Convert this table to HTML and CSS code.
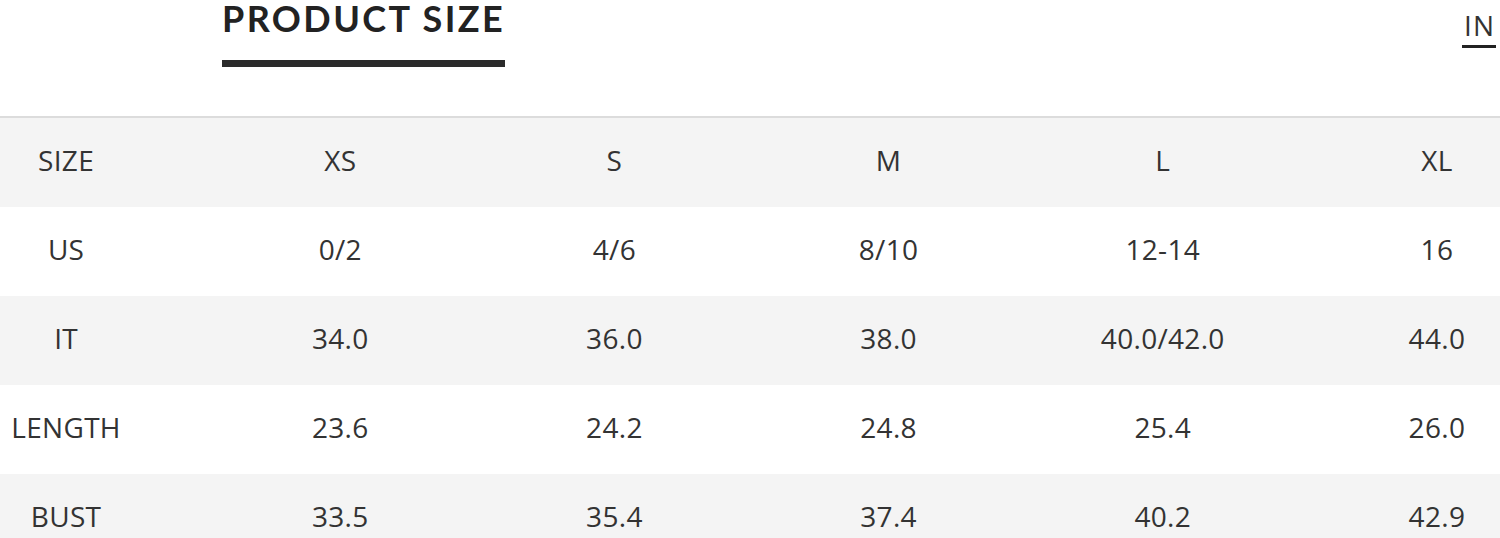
FILE: index.html
```html
<!DOCTYPE html>
<html>
<head>
<meta charset="utf-8">
<link rel="stylesheet" href="styles.css">
</head>
<body>
<div class="page">
  <header class="top">
    <div class="tab">
      <h1 class="title">PRODUCT SIZE</h1>
      <div class="tab-bar"></div>
    </div>
    <div class="unit">
      <span class="unit-label">IN</span>
    </div>
  </header>
  <div class="table-wrap">
    <div class="table">
      <div class="row gray">
        <div class="cell">SIZE</div><div class="cell">XS</div><div class="cell">S</div><div class="cell">M</div><div class="cell">L</div><div class="cell">XL</div>
      </div>
      <div class="row">
        <div class="cell">US</div><div class="cell">0/2</div><div class="cell">4/6</div><div class="cell">8/10</div><div class="cell">12-14</div><div class="cell">16</div>
      </div>
      <div class="row gray">
        <div class="cell">IT</div><div class="cell">34.0</div><div class="cell">36.0</div><div class="cell">38.0</div><div class="cell">40.0/42.0</div><div class="cell">44.0</div>
      </div>
      <div class="row">
        <div class="cell">LENGTH</div><div class="cell">23.6</div><div class="cell">24.2</div><div class="cell">24.8</div><div class="cell">25.4</div><div class="cell">26.0</div>
      </div>
      <div class="row gray">
        <div class="cell">BUST</div><div class="cell">33.5</div><div class="cell">35.4</div><div class="cell">37.4</div><div class="cell">40.2</div><div class="cell">42.9</div>
      </div>
    </div>
  </div>
</div>
</body>
</html>
```
FILE: styles.css
```css
html, body {
  margin: 0;
  padding: 0;
  background: #fff;
  overflow: hidden;
}
.page {
  width: 1500px;
  height: 538px;
  overflow: hidden;
}
.top {
  display: flex;
  justify-content: space-between;
  align-items: flex-start;
  height: 116px;
  border-bottom: 2px solid #dcdcdc;
  box-sizing: content-box;
}
.tab {
  margin-left: 222px;
  display: flex;
  flex-direction: column;
  align-items: flex-start;
}
.title {
  margin: 0;
  font-family: Lato, "Open Sans", sans-serif;
  font-weight: 700;
  font-size: 36px;
  line-height: 36px;
  letter-spacing: 2.4px;
  color: #222;
  white-space: nowrap;
}
.tab-bar {
  margin-top: 24px;
  width: 283px;
  height: 7px;
  background: #2b2b2b;
}
.unit {
  margin-right: 4px;
  padding-top: 9px;
}
.unit-label {
  display: block;
  font-family: "Open Sans", sans-serif;
  font-size: 28px;
  line-height: 32px;
  color: #333;
  padding: 0 1px 4px 2px;
  border-bottom: 3px solid #222;
  letter-spacing: 1px;
}
.table-wrap {
  margin-left: -71px;
  width: 1645px;
}
.row {
  display: grid;
  grid-template-columns: repeat(6, 1fr);
  height: 89px;
  align-items: center;
}
.row.gray {
  background: #f4f4f4;
}
.cell {
  text-align: center;
  font-family: "Open Sans", sans-serif;
  font-size: 28px;
  line-height: 34px;
  padding-bottom: 6px;
  letter-spacing: 0.3px;
  color: #333;
  white-space: nowrap;
}
```
